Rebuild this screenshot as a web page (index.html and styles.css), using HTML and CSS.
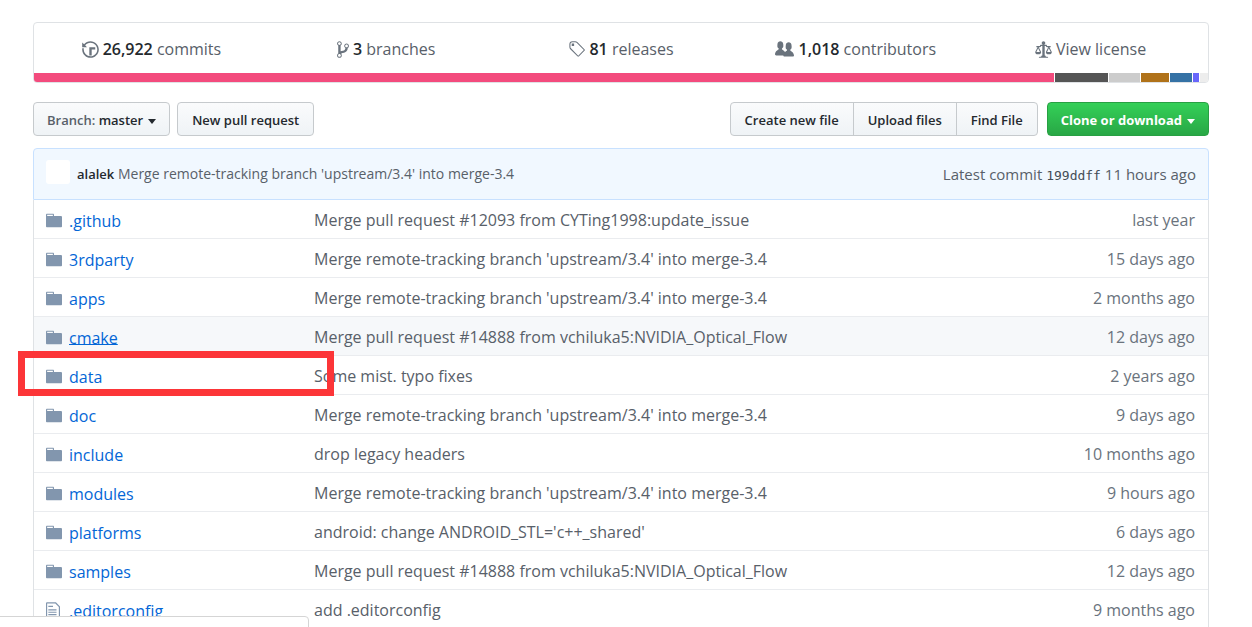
FILE: index.html
```html
<!DOCTYPE html>
<html lang="en">
<head>
<meta charset="utf-8">
<title>Repository files</title>
<link rel="stylesheet" href="styles.css">
</head>
<body>
<svg class="sprite" aria-hidden="true">
  <symbol id="history" viewBox="0 0 14 16"><path d="M8 13H6V6h5v2H8v5zM7 1C4.81 1 2.87 2.02 1.59 3.59L0 2v4h4L2.500 4.500C3.550 3.170 5.170 2.300 7 2.300c3.140 0 5.700 2.560 5.700 5.700s-2.560 5.700-5.700 5.700A5.710 5.710 0 0 1 1.300 8c0-.34.03-.67.09-1H.08C.03 7.330 0 7.660 0 8c0 3.860 3.140 7 7 7s7-3.140 7-7-3.140-7-7-7z"/></symbol>
  <symbol id="branch" viewBox="0 0 10 16"><path d="M10 5c0-1.110-.89-2-2-2a1.993 1.993 0 0 0-1 3.720v.3c-.02.52-.23.98-.63 1.380-.4.4-.86.61-1.380.63-.83.02-1.480.16-2 .45V4.720a1.993 1.993 0 0 0-1-3.720C.88 1 0 1.890 0 3a2 2 0 0 0 1 1.720v6.560c-.59.35-1 .99-1 1.720 0 1.110.89 2 2 2 1.110 0 2-.89 2-2 0-.53-.2-1-.53-1.360.09-.06.48-.41.59-.47.25-.11.56-.17.94-.17 1.050-.05 1.950-.45 2.750-1.250S8.950 7.770 9 6.730h-.02C9.590 6.370 10 5.730 10 5zM2 1.800c.66 0 1.200.55 1.200 1.200 0 .65-.55 1.200-1.200 1.200C1.350 4.200.8 3.650.8 3c0-.65.55-1.200 1.200-1.200zm0 12.410c-.66 0-1.200-.55-1.200-1.200 0-.65.55-1.200 1.200-1.200.65 0 1.200.55 1.200 1.200 0 .65-.55 1.200-1.200 1.200zm6-8c-.66 0-1.200-.55-1.200-1.200 0-.65.55-1.200 1.200-1.200.65 0 1.200.55 1.200 1.200 0 .65-.55 1.200-1.200 1.200z"/></symbol>
  <symbol id="tag" viewBox="0 0 14 16"><path d="M7.685 1.720a2.490 2.490 0 0 0-1.760-.726H3.480A2.500 2.500 0 0 0 .994 3.480v2.456c0 .656.269 1.292.726 1.760l6.024 6.024a.99.99 0 0 0 1.402 0l4.563-4.563a.99.99 0 0 0 0-1.402L7.685 1.720zM2.366 7.048a1.540 1.540 0 0 1-.467-1.123V3.480c0-.874.716-1.580 1.580-1.580h2.456c.418 0 .825.159 1.123.467l6.104 6.094-4.702 4.702-6.094-6.114zm.626-4.066h1.989v1.989H2.982V2.982z"/></symbol>
  <symbol id="people" viewBox="0 0 16 16"><path d="M16 12.999c0 .439-.45 1-1 1H7.995c-.539 0-.994-.447-.995-.999H1c-.54 0-1-.561-1-1 0-2.634 3-4 3-4s.229-.409 0-1c-.841-.621-1.058-.59-1-3 .058-2.419 1.367-3 2.500-3s2.442.58 2.500 3c.058 2.410-.159 2.379-1 3-.229.59 0 1 0 1s1.549.711 2.420 2.088C9.196 9.369 10 8.999 10 8.999s.229-.409 0-1c-.841-.62-1.058-.59-1-3 .058-2.419 1.367-3 2.500-3s2.437.581 2.495 3c.059 2.410-.158 2.380-1 3-.229.59 0 1 0 1s3.005 1.366 3.005 4z"/></symbol>
  <symbol id="law" viewBox="0 0 14 16"><path d="M7 4c-.83 0-1.500-.67-1.500-1.500S6.170 1 7 1s1.500.67 1.500 1.500S7.830 4 7 4zm7 6c0 1.110-.89 2-2 2h-1c-1.110 0-2-.89-2-2l2-4h-1c-.55 0-1-.45-1-1H8v8c.42 0 1 .45 1 1h1c.42 0 1 .45 1 1H3c0-.55.58-1 1-1h1c0-.55.58-1 1-1h.03L6 5H5c0 .55-.45 1-1 1H3l2 4c0 1.110-.89 2-2 2H2c-1.110 0-2-.89-2-2l2-4H1V5h3c0-.55.45-1 1-1h4c.55 0 1 .45 1 1h3v1h-1l2 4zM2.500 7L1 10h3L2.500 7zM13 10l-1.500-3-1.500 3h3z"/></symbol>
  <symbol id="folder" viewBox="0 0 14 16"><path d="M13 4H7V3c0-.66-.31-1-1-1H1c-.55 0-1 .45-1 1v10c0 .55.45 1 1 1h12c.55 0 1-.45 1-1V5c0-.55-.45-1-1-1zM6 4H1V3h5v1z"/></symbol>
  <symbol id="file" viewBox="0 0 12 16"><path d="M6 5H2V4h4v1zM2 8h7V7H2v1zm0 2h7V9H2v1zm0 2h7v-1H2v1zm10-7.500V14c0 .55-.45 1-1 1H1c-.55 0-1-.45-1-1V2c0-.55.45-1 1-1h7.500L12 4.500zM11 5L8 2H1v12h10V5z"/></symbol>
</svg>
<main class="page">
  <section class="summary">
    <nav class="stats">
      <a class="stat" href="#"><svg class="icon"><use href="#history"/></svg><span><strong>26,922</strong> commits</span></a>
      <a class="stat" href="#"><svg class="icon narrow"><use href="#branch"/></svg><span><strong>3</strong> branches</span></a>
      <a class="stat" href="#"><svg class="icon"><use href="#tag"/></svg><span><strong>81</strong> releases</span></a>
      <a class="stat" href="#"><svg class="icon wide"><use href="#people"/></svg><span><strong>1,018</strong> contributors</span></a>
      <a class="stat" href="#"><svg class="icon"><use href="#law"/></svg><span>View license</span></a>
    </nav>
    <div class="languages">
      <span class="cpp"></span><span class="c"></span><span class="other"></span><span class="java"></span><span class="python"></span><span class="objc"></span><span class="rest"></span>
    </div>
  </section>

  <div class="toolbar">
    <button class="btn" type="button"><span class="muted">Branch:</span> master<span class="caret"></span></button>
    <button class="btn" type="button">New pull request</button>
    <div class="group">
      <button class="btn" type="button">Create new file</button>
      <button class="btn" type="button">Upload files</button>
      <button class="btn" type="button">Find File</button>
    </div>
    <button class="btn primary" type="button">Clone or download<span class="caret"></span></button>
  </div>

  <div class="commit">
    <span class="avatar"></span>
    <p class="message"><a class="author" href="#">alalek</a> <a href="#">Merge remote-tracking branch 'upstream/3.4' into merge-3.4</a></p>
    <p class="latest">Latest commit <a class="sha" href="#">199ddff</a> 11 hours ago</p>
  </div>

  <table class="files">
    <tbody>
    <tr><td class="name"><svg class="icon"><use href="#folder"/></svg><a href="#">.github</a></td><td class="note">Merge pull request #12093 from CYTing1998:update_issue</td><td class="age">last year</td></tr>
    <tr><td class="name"><svg class="icon"><use href="#folder"/></svg><a href="#">3rdparty</a></td><td class="note">Merge remote-tracking branch 'upstream/3.4' into merge-3.4</td><td class="age">15 days ago</td></tr>
    <tr><td class="name"><svg class="icon"><use href="#folder"/></svg><a href="#">apps</a></td><td class="note">Merge remote-tracking branch 'upstream/3.4' into merge-3.4</td><td class="age">2 months ago</td></tr>
    <tr class="active"><td class="name"><svg class="icon"><use href="#folder"/></svg><a href="#">cmake</a></td><td class="note">Merge pull request #14888 from vchiluka5:NVIDIA_Optical_Flow</td><td class="age">12 days ago</td></tr>
    <tr><td class="name"><svg class="icon"><use href="#folder"/></svg><a href="#">data</a><span class="marker"></span></td><td class="note">Some mist. typo fixes</td><td class="age">2 years ago</td></tr>
    <tr><td class="name"><svg class="icon"><use href="#folder"/></svg><a href="#">doc</a></td><td class="note">Merge remote-tracking branch 'upstream/3.4' into merge-3.4</td><td class="age">9 days ago</td></tr>
    <tr><td class="name"><svg class="icon"><use href="#folder"/></svg><a href="#">include</a></td><td class="note">drop legacy headers</td><td class="age">10 months ago</td></tr>
    <tr><td class="name"><svg class="icon"><use href="#folder"/></svg><a href="#">modules</a></td><td class="note">Merge remote-tracking branch 'upstream/3.4' into merge-3.4</td><td class="age">9 hours ago</td></tr>
    <tr><td class="name"><svg class="icon"><use href="#folder"/></svg><a href="#">platforms</a></td><td class="note">android: change ANDROID_STL='c++_shared'</td><td class="age">6 days ago</td></tr>
    <tr><td class="name"><svg class="icon"><use href="#folder"/></svg><a href="#">samples</a></td><td class="note">Merge pull request #14888 from vchiluka5:NVIDIA_Optical_Flow</td><td class="age">12 days ago</td></tr>
    <tr><td class="name"><svg class="icon doc"><use href="#file"/></svg><a href="#">.editorconfig</a></td><td class="note">add .editorconfig</td><td class="age">9 months ago</td></tr>
    </tbody>
  </table>
</main>
<div class="status"></div>
</body>
</html>
```
FILE: styles.css
```css
* { box-sizing: border-box; }
body {
  margin: 0;
  height: 100vh;
  overflow: hidden;
  background: #fff;
  color: #586069;
  font: 16px/24px "Open Sans", "Noto Sans", sans-serif;
}
a { color: inherit; text-decoration: none; }
p { margin: 0; }
.sprite { position: absolute; width: 0; height: 0; }
.icon { flex: none; width: 17px; height: 19px; fill: #6a737d; }
.icon.narrow { width: 12px; }
.icon.wide { width: 19px; }
.page { padding: 22px 43px 0 33px; }

.summary {
  border: 1px solid #dfe2e5;
  border-radius: 4px;
  overflow: hidden;
}
.stats { display: flex; height: 50px; padding-top: 2px; }
.stat {
  flex: 1;
  display: flex;
  align-items: center;
  justify-content: center;
  gap: 4px;
}
.stat strong { color: #24292e; font-weight: 600; }
.languages { display: flex; gap: 1px; height: 9px; }
.languages span { flex: none; }
.languages .cpp { flex: 1; background: #f34b7d; }
.c { width: 53px; background: #555; }
.other { width: 31px; background: #ccc; }
.java { width: 28px; background: #b07219; }
.python { width: 22px; background: #3572a5; }
.objc { width: 6px; background: #6866fb; }
.rest { width: 8px; background: #ededed; }

.toolbar { display: flex; gap: 7px; margin: 19px 0 12px; }
.btn {
  height: 34px;
  padding: 2px 14px 0;
  border: 1px solid #c6cacd;
  border-radius: 4px;
  background: linear-gradient(#fafbfc, #eff3f6);
  color: #24292e;
  font: 600 13px/20px "Open Sans", "Noto Sans", sans-serif;
  white-space: nowrap;
}
.toolbar > .btn:first-child { padding: 2px 13px 0; }
.muted { color: #586069; }
.caret {
  display: inline-block;
  margin-left: 5px;
  border: 4px solid transparent;
  border-top: 5px solid currentColor;
  border-bottom: 0;
  vertical-align: middle;
}
.group { display: flex; margin: 0 2px 0 auto; }
.group .btn { border-radius: 0; }
.group .btn + .btn { margin-left: -1px; }
.group .btn:first-child { border-radius: 4px 0 0 4px; }
.group .btn:last-child { border-radius: 0 4px 4px 0; }
.toolbar > .primary {
  padding: 2px 13px 0;
  border-color: #28a043;
  background: linear-gradient(#34d058, #28a745);
  color: #fff;
  font-weight: 700;
}

.commit {
  display: flex;
  align-items: center;
  height: 52px;
  padding: 0 12px;
  border: 1px solid #c8e1ff;
  border-radius: 4px 4px 0 0;
  background: #f1f8ff;
}
.avatar { width: 24px; height: 24px; margin: 0 7px 4px 0; border-radius: 3px; background: #fff; }
.message { font-size: 14px; }
.author { color: #24292e; font-size: 13px; font-weight: 600; }
.latest { margin-left: auto; font-size: 15px; }
.sha { color: #444d56; font: 13px "DejaVu Sans Mono", monospace; }

.files {
  width: 100%;
  border: solid #dfe2e5;
  border-width: 0 1px;
  border-spacing: 0;
  table-layout: fixed;
}
.files td { height: 39px; padding: 2px 13px 0 12px; border-bottom: 1px solid #eaecef; white-space: nowrap; }
.files .name {
  position: relative;
  width: 280px;
}
.name .icon { width: 16px; margin-right: 7px; fill: #8296ae; vertical-align: middle; }
.name .icon.doc { width: 14px; margin-right: 9px; }
.name a { color: #0366d6; vertical-align: middle; }
.files .name { padding-top: 1px; }
.files .note { padding-left: 0; }
.files .age { width: 160px; color: #6a737d; text-align: right; }
.active td { background: #f6f8fa; }
.active a { text-decoration: underline; }
.marker {
  position: absolute;
  z-index: 1;
  top: -5px;
  left: -16px;
  width: 316px;
  height: 45px;
  border: 7px solid #fc3538;
}
.status {
  position: fixed;
  bottom: -1px;
  left: -1px;
  width: 310px;
  height: 12px;
  border: 1px solid #d5d5d5;
  border-top-right-radius: 4px;
  background: #fff;
}
```
